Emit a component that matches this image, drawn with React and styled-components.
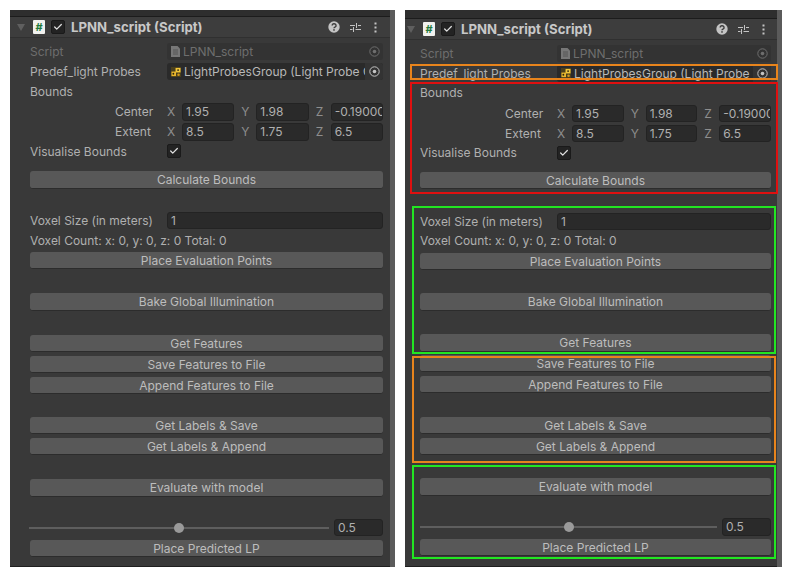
import styled, { createGlobalStyle } from "styled-components";
import { Check } from "lucide-react";

const Page = createGlobalStyle`
    html, body {
        margin: 0;
        padding: 0;
        background: #fff;
        overflow: hidden;
    }
    body {
        font-family: Inter, "Liberation Sans", sans-serif;
    }
`
const Screen = styled.div`
    display: flex;
    align-items: flex-start;
    padding: 10px 0 0 10px;
`
const PanelWrap = styled.div`
    position: relative;
    display: flex;
    height: 557px;
    margin-right: ${p => p.$after}px;
`
const Panel = styled.div`
    width: ${p => p.$width}px;
    display: flex;
    flex-direction: column;
    background: #393939;
    border-bottom: 1px solid #1f1f1f;
    box-sizing: border-box;
`
const Scrollbar = styled.div`
    width: 5px;
    background: #5b5b5b;
`
const TopBand = styled.div`
    height: ${p => p.$height}px;
    background: #2e2e2e;
    border-bottom: 1px solid #1c1c1c;
`
const Header = styled.div`
    height: 20px;
    display: flex;
    align-items: center;
    background: #3d3d3d;
    border-bottom: 1px solid #303030;
    padding-left: ${p => p.$left}px;
    padding-right: ${p => p.$right}px;
`
const Caret = styled.div`
    width: 0;
    height: 0;
    border-left: 4px solid transparent;
    border-right: 4px solid transparent;
    border-top: 7px solid #5f5f5f;
    margin-right: 8px;
`
const ScriptBadge = styled.div`
    width: 12px;
    height: 14px;
    background: #f1f1ee;
    border-radius: 1px;
    color: #1f7a3c;
    font-size: 11px;
    font-weight: 700;
    line-height: 14px;
    text-align: center;
    margin-right: 6px;
`
const CheckBox = styled.div`
    width: 14px;
    height: 14px;
    display: flex;
    align-items: center;
    justify-content: center;
    background: #232323;
    border: 1px solid #1a1a1a;
    border-radius: 2px;
    box-sizing: border-box;
    color: #e0e0e0;
`
const Title = styled.div`
    margin-left: 6px;
    flex: 1;
    color: #c8c8c8;
    font-size: 13.2px;
    font-weight: 700;
    white-space: nowrap;
`
const HeaderIcons = styled.div`
    display: flex;
    align-items: center;
    gap: 10px;
`
const Body = styled.div`
    display: flex;
    flex-direction: column;
    gap: 3.5px;
    padding: ${p => p.$top}px ${p => p.$right}px 0 ${p => p.$left}px;
`
const Row = styled.div`
    display: grid;
    grid-template-columns: 137px 1fr;
    align-items: center;
    height: 16.5px;
`
const Label = styled.div`
    color: ${p => (p.$dim ? "#6e6e6e" : "#b0b0b0")};
    font-size: 12px;
    white-space: nowrap;
    padding-left: ${p => (p.$sub ? 85 : 0)}px;
`
const ObjectField = styled.div`
    height: 17px;
    display: flex;
    align-items: center;
    background: ${p => (p.$dim ? "#333333" : "#2a2a2a")};
    border-radius: 3px;
    padding-left: 4px;
    color: ${p => (p.$dim ? "#6e6e6e" : "#b8b8b8")};
    font-size: 12px;
    white-space: nowrap;
    overflow: hidden;
`
const FieldName = styled.span`
    flex: 1;
    margin-left: 3px;
    overflow: hidden;
`
const Picker = styled.div`
    width: 18px;
    height: 100%;
    flex: none;
    display: flex;
    align-items: center;
    justify-content: center;
    background: ${p => (p.$dim ? "transparent" : "#333333")};
    color: ${p => (p.$dim ? "#6e6e6e" : "#c4c4c4")};
`
const VectorFields = styled.div`
    display: grid;
    grid-template-columns: repeat(3, 1fr);
    gap: 7px;
`
const Axis = styled.div`
    display: grid;
    grid-template-columns: 15px 1fr;
    align-items: center;
    color: #8e8e8e;
    font-size: 12px;
`
const NumberField = styled.div`
    height: 17.5px;
    line-height: 16px;
    width: ${p => (p.$width ? `${p.$width}px` : "auto")};
    background: #2a2a2a;
    border: 1px solid #232323;
    border-radius: 3px;
    box-sizing: border-box;
    padding-left: 3px;
    color: #b0b0b0;
    font-size: 12px;
    white-space: nowrap;
    overflow: hidden;
    flex: none;
`
const Button = styled.div`
    height: 17.4px;
    line-height: 18px;
    background: #585858;
    border-bottom: 1px solid #2c2c2c;
    border-radius: 3px;
    box-sizing: border-box;
    color: #bdbdbd;
    font-size: 12px;
    text-align: center;
`
const Spacer = styled.div`
    height: ${p => p.$height}px;
`
const SliderRow = styled.div`
    display: flex;
    align-items: center;
    gap: 5px;
    height: 17px;
`
const Track = styled.div`
    position: relative;
    flex: 1;
    height: 2px;
    margin-left: ${p => -p.$bleed}px;
    background: #5e5e5e;
`
const Thumb = styled.div`
    position: absolute;
    left: 50%;
    top: -4px;
    width: 10px;
    height: 10px;
    margin-left: -5px;
    border-radius: 50%;
    background: #9a9a9a;
`
const Outline = styled.div`
    position: absolute;
    left: ${p => p.$x}px;
    top: ${p => p.$y}px;
    width: ${p => p.$w}px;
    height: ${p => p.$h}px;
    border: 2px solid ${p => p.$color};
    box-sizing: border-box;
`
const MenuDots = styled.svg`
    margin-left: 3px;
`
const FieldIcon = styled.svg`
    flex: none;
`

function HelpIcon() {
    return (
        <svg width="12" height="12" viewBox="0 0 11 11">
            <circle cx="5.5" cy="5.5" r="5.2" fill="#c4c4c4" />
            <path d="M3.8 4.2a1.8 1.6 0 1 1 2.6 1.4c-.6.3-.9.6-.9 1.1" fill="none" stroke="#3d3d3d" strokeWidth="1.3" />
            <rect x="4.8" y="7.5" width="1.4" height="1.4" fill="#3d3d3d" />
        </svg>
    )
}

function PresetIcon() {
    return (
        <svg width="11" height="11" viewBox="0 0 11 11" stroke="#c4c4c4" strokeWidth="1" fill="none">
            <path d="M0 3.5h5M8 3.5h3M0 7.5h2.5M5.5 7.5h5.5M6.5 1v5M3.5 5v5" />
        </svg>
    )
}

function MenuIcon() {
    return (
        <MenuDots width="3" height="11" viewBox="0 0 3 11" fill="#c4c4c4">
            <rect x="0.5" y="0.5" width="2" height="2" />
            <rect x="0.5" y="4.5" width="2" height="2" />
            <rect x="0.5" y="8.5" width="2" height="2" />
        </MenuDots>
    )
}

function TargetIcon() {
    return (
        <svg width="11" height="11" viewBox="0 0 11 11">
            <circle cx="5.5" cy="5.5" r="4.7" fill="none" stroke="currentColor" strokeWidth="1" />
            <circle cx="5.5" cy="5.5" r="1.8" fill="currentColor" />
        </svg>
    )
}

function ScriptFileIcon() {
    return (
        <FieldIcon width="9" height="11" viewBox="0 0 9 11">
            <path d="M0 0h6.5L9 2.5V11H0z" fill="#777" />
            <path d="M2 4h5M2 6h5M2 8h5" stroke="#4c4c4c" strokeWidth="0.8" />
        </FieldIcon>
    )
}

function ProbeIcon() {
    return (
        <FieldIcon width="10" height="10" viewBox="0 0 11 11">
            <rect width="11" height="11" fill="#4a3f1c" />
            <rect x="0.5" y="5" width="5" height="5" fill="#e8b52c" />
            <rect x="5" y="1" width="5.5" height="5" fill="#f2c63a" />
            <circle cx="2.6" cy="7.4" r="1" fill="#2a2410" />
            <circle cx="7.8" cy="3.4" r="1" fill="#2a2410" />
            <circle cx="8.3" cy="8.6" r="1.4" fill="#d49a1c" />
        </FieldIcon>
    )
}

function VectorRow({ name, values }) {
    return (
        <Row>
            <Label $sub>{name}</Label>
            <VectorFields>
                {["X", "Y", "Z"].map((axis, i) => (
                    <Axis key={axis}>
                        {axis}
                        <NumberField>{values[i]}</NumberField>
                    </Axis>
                ))}
            </VectorFields>
        </Row>
    )
}

// spaces = the empty stretches between the groups of buttons, top to bottom
function Inspector({ width, band, left, right, top, bleed, spaces }) {
    return (
        <Panel $width={width}>
            <TopBand $height={band} />
            <Header $left={left - 13} $right={right + 6.5}>
                <Caret />
                <ScriptBadge>#</ScriptBadge>
                <CheckBox><Check size={10} strokeWidth={3} /></CheckBox>
                <Title>LPNN_script (Script)</Title>
                <HeaderIcons>
                    <HelpIcon />
                    <PresetIcon />
                    <MenuIcon />
                </HeaderIcons>
            </Header>
            <Body $left={left} $right={right} $top={top}>
                <Row>
                    <Label $dim>Script</Label>
                    <ObjectField $dim>
                        <ScriptFileIcon />
                        <FieldName>LPNN_script</FieldName>
                        <Picker $dim><TargetIcon /></Picker>
                    </ObjectField>
                </Row>
                <Row>
                    <Label>Predef_light Probes</Label>
                    <ObjectField>
                        <ProbeIcon />
                        <FieldName>LightProbesGroup (Light Probe Group)</FieldName>
                        <Picker><TargetIcon /></Picker>
                    </ObjectField>
                </Row>
                <Row><Label>Bounds</Label></Row>
                <VectorRow name="Center" values={["1.95", "1.98", "-0.19000"]} />
                <VectorRow name="Extent" values={["8.5", "1.75", "6.5"]} />
                <Row>
                    <Label>Visualise Bounds</Label>
                    <CheckBox><Check size={10} strokeWidth={3} /></CheckBox>
                </Row>
                <Spacer $height={spaces[0]} />
                <Button>Calculate Bounds</Button>
                <Spacer $height={spaces[1]} />
                <Row>
                    <Label>Voxel Size (in meters)</Label>
                    <NumberField>1</NumberField>
                </Row>
                <Row><Label>Voxel Count: x: 0, y: 0, z: 0 Total: 0</Label></Row>
                <Button>Place Evaluation Points</Button>
                <Spacer $height={spaces[2]} />
                <Button>Bake Global Illumination</Button>
                <Spacer $height={spaces[3]} />
                <Button>Get Features</Button>
                <Button>Save Features to File</Button>
                <Button>Append Features to File</Button>
                <Spacer $height={spaces[4]} />
                <Button>Get Labels &amp; Save</Button>
                <Button>Get Labels &amp; Append</Button>
                <Spacer $height={spaces[5]} />
                <Button>Evaluate with model</Button>
                <Spacer $height={spaces[6]} />
                <SliderRow>
                    <Track $bleed={bleed}><Thumb /></Track>
                    <NumberField $width={49}>0.5</NumberField>
                </SliderRow>
                <Button>Place Predicted LP</Button>
            </Body>
        </Panel>
    )
}

const marks = [
    { color: "#e8841c", x: 5, y: 54, w: 368, h: 16 },
    { color: "#e01010", x: 5, y: 72, w: 368, h: 112 },
    { color: "#22e622", x: 7, y: 196, w: 364, h: 148 },
    { color: "#e8841c", x: 7, y: 346, w: 364, h: 107 },
    { color: "#22e622", x: 7, y: 455, w: 364, h: 94 },
]

export default function App() {
    return (
        <Screen>
            <Page />
            <PanelWrap $after={10}>
                <Inspector width={380} band={6} left={20} right={7} top={5} bleed={1} spaces={[4.75, 16.35, 17, 17, 16, 17, 15.5]} />
                <Scrollbar />
            </PanelWrap>
            <PanelWrap $after={0}>
                <Inspector width={372} band={8} left={15} right={6} top={4.5} bleed={0} spaces={[3.95, 16.4, 16.1, 16.6, 16.5, 16, 15.9]} />
                <Scrollbar />
                {marks.map(m => (
                    <Outline key={m.y} $color={m.color} $x={m.x} $y={m.y} $w={m.w} $h={m.h} />
                ))}
            </PanelWrap>
        </Screen>
    )
}
